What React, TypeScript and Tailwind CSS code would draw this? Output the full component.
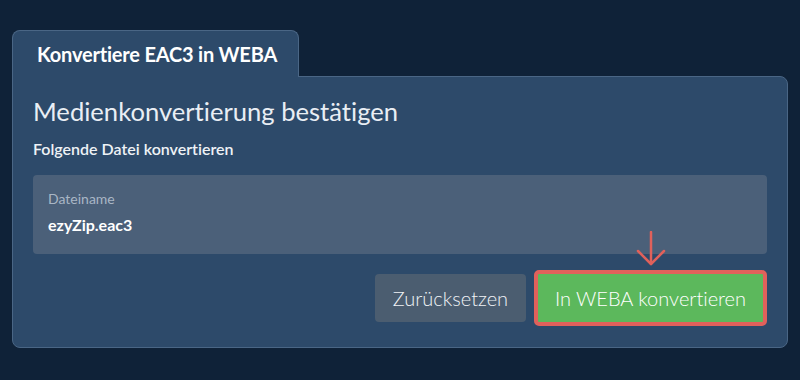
import React from "react";

export default function App() {
  return (
    <div
      className="w-[800px] h-[380px] bg-[#0f2238] overflow-hidden [font-variant-ligatures:none]"
      style={{ fontFamily: "Lato, 'Noto Sans', sans-serif" }}
    >
      <div className="pt-[30px] pl-[12px] w-[788px]">
        <div className="relative z-10 -mb-px w-[287px] h-[47px] bg-[#2d4a6a] border border-b-0 border-[#4a6685] rounded-t-lg flex items-center pl-6">
          <span className="text-white font-bold text-[20px] tracking-[-0.2px]">
            Konvertiere EAC3 in WEBA
          </span>
        </div>
        <div className="bg-[#2d4a6a] border border-[#4a6685] rounded-lg rounded-tl-none h-[272px] px-[20px] pt-[19px]">
          <h1 className="text-[#e9eef4] text-[25.6px] leading-[30px]">
            Medienkonvertierung bestätigen
          </h1>
          <p className="mt-[14px] text-[#eef2f6] text-[16px] font-semibold leading-[18px]">
            Folgende Datei konvertieren
          </p>
          <div className="mt-[17px] h-[79px] bg-[#4b6079] rounded-[4px] px-[15px] pt-[16px]">
            <div className="text-[#a9b6c5] text-[14px] leading-[16px]">Dateiname</div>
            <div className="mt-[8px] text-white font-bold text-[16px] leading-[20px]">
              ezyZip.eac3
            </div>
          </div>
          <div className="relative flex justify-end items-center gap-[8px] mt-[16px]">
            <button className="h-[48px] w-[151px] bg-[#4b5d70] rounded-[4px] text-[#f0f3f6] text-[20px] font-light">
              Zurücksetzen
            </button>
            <div className="relative">
              <svg
                className="absolute left-1/2 -translate-x-1/2 -top-[39px]"
                width="30"
                height="36"
                viewBox="0 0 30 36"
                fill="none"
                stroke="#e0615b"
                strokeWidth="2.5"
                strokeLinecap="round"
                strokeLinejoin="round"
              >
                <path d="M15 1 V33" />
                <path d="M2 20 L15 33 L28 20" />
              </svg>
              <button className="h-[56px] w-[233px] bg-[#5cb85c] border-[4px] border-[#e0615b] rounded-[5px] text-white text-[20px] font-light">
                In WEBA konvertieren
              </button>
            </div>
          </div>
        </div>
      </div>
    </div>
  );
}
